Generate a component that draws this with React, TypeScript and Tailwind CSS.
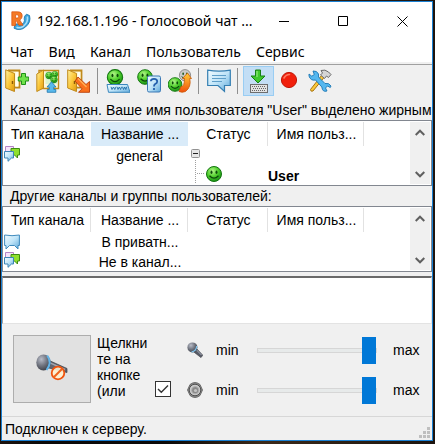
import type { ReactNode } from 'react';

const uiFont = "font-['Liberation_Sans',Arial,sans-serif]";
const captionFont = "font-['Noto_Sans','Open_Sans',sans-serif]";

function Defs() {
  return (
    <svg width="0" height="0" className="absolute" aria-hidden="true">
      <defs>
        <radialGradient id="green" cx="0.4" cy="0.3" r="0.75">
          <stop offset="0" stopColor="#b4f58a" />
          <stop offset="0.5" stopColor="#4fcf2c" />
          <stop offset="1" stopColor="#128a12" />
        </radialGradient>
        <linearGradient id="gold" x1="0" y1="0" x2="1" y2="1">
          <stop offset="0" stopColor="#fff0a0" />
          <stop offset="0.5" stopColor="#fcc93c" />
          <stop offset="1" stopColor="#e09a10" />
        </linearGradient>
        <linearGradient id="sky" x1="0" y1="0" x2="1" y2="1">
          <stop offset="0" stopColor="#f2fbff" />
          <stop offset="0.5" stopColor="#bfe4f8" />
          <stop offset="1" stopColor="#5fa9da" />
        </linearGradient>
        <linearGradient id="fire" x1="0" y1="0" x2="0" y2="1">
          <stop offset="0" stopColor="#ffcf3a" />
          <stop offset="1" stopColor="#f0500c" />
        </linearGradient>
        <radialGradient id="steel" cx="0.35" cy="0.3" r="0.8">
          <stop offset="0" stopColor="#b8bcc8" />
          <stop offset="0.5" stopColor="#70747f" />
          <stop offset="1" stopColor="#34363e" />
        </radialGradient>
      </defs>
    </svg>
  );
}

function Svg({ size = 24, children }: { size?: number; children: ReactNode }) {
  return (
    <svg width={size} height={size} viewBox={`0 0 ${size} ${size}`} className="block shrink-0" aria-hidden="true">
      {children}
    </svg>
  );
}

function Smiley({ cx, cy, r, fill = 'url(#green)', edge = '#12740f' }: { cx: number; cy: number; r: number; fill?: string; edge?: string }) {
  return (
    <g transform={`translate(${cx} ${cy}) scale(${r / 8})`}>
      <circle r="7.5" fill={fill} stroke={edge} />
      <ellipse cx="-2.5" cy="-1.8" rx="1" ry="1.7" fill="#0d4a0b" />
      <ellipse cx="2.5" cy="-1.8" rx="1" ry="1.7" fill="#0d4a0b" />
      <path d="M-4.5 1.8Q0 6.6 4.5 1.8" fill="none" stroke="#0d4a0b" strokeWidth="1.3" />
    </g>
  );
}

function Door() {
  return (
    <g>
      <path d="M3 1.5H14.5V18.5H9" fill="#fff3c0" stroke="#c08a1c" strokeWidth="1.8" />
      <path d="M10.5 3H13.3V17.5H10.5Z" fill="#fffdf0" />
      <path d="M.7 .8L9.5 4.5V22.5L.7 19Z" fill="url(#gold)" stroke="#c08a1c" />
      <path d="M7.5 12V15" stroke="#8a5a08" strokeWidth="1.4" />
    </g>
  );
}

const JoinIcon = () => (
  <Svg>
    <Door />
    <path d="M16.5 4.5H20.5V8H23.7V12H20.5V15.5H16.5V12H13.3V8H16.5Z" fill="#6fe24a" stroke="#1f8f18" />
  </Svg>
);

const RoomIcon = () => (
  <Svg>
    <path d="M3 1.5H22.5V19.5H3Z" fill="#fff7d8" stroke="#c08a1c" strokeWidth="1.4" />
    <path d="M9.5 3H21.5V15H9.5Z" fill="#d9f3cf" />
    <Smiley cx={13} cy={6.5} r={3.6} />
    <Smiley cx={18.8} cy={5.2} r={3.2} />
    <Smiley cx={18} cy={10.5} r={3.6} />
    <path d="M.8 5L7.5 1V19L.8 22.5Z" fill="url(#gold)" stroke="#c08a1c" />
    <path d="M15.5 12.8L20 18H17.8V20.5H19.8V23.3H11.2V20.5H13.2V18H11Z" fill="#59b9ec" stroke="#1c76ae" strokeWidth=".8" />
  </Svg>
);

const LeaveIcon = () => (
  <Svg>
    <Door />
    <path d="M11 8L19 15.5L22.5 12.5V23.3H11.5L15 19.8L8 12Z" fill="#f9701c" stroke="#b93e08" strokeWidth=".9" />
    <path d="M11 9.5L19.5 18" stroke="#ffae55" strokeWidth="1.4" />
  </Svg>
);

const WebUserIcon = () => (
  <Svg>
    <Smiley cx={9} cy={8.3} r={8.2} />
    <path d="M1 15.5H21.5L24 23.3H2.5Z" fill="url(#sky)" stroke="#3b87bd" />
    <path d="M5 17.8L6 20.5L7.5 18L8.8 20.5L10 17.8M11 17.8L12 20.5L13.3 18L14.6 20.5L15.6 17.8M16.5 17.8L17.5 20.5L18.7 18L19.8 20.5L20.8 17.8" fill="none" stroke="#1e6ca6" strokeWidth=".9" />
  </Svg>
);

const AskUserIcon = () => (
  <Svg>
    <Smiley cx={8} cy={8} r={7.8} />
    <rect x="10.5" y="7" width="13" height="16" rx="1.5" fill="url(#sky)" stroke="#3b78b5" />
    <path d="M13.8 12.2Q14 9.8 17 9.8Q20.2 9.8 20.2 12.4Q20.2 14 18.2 15Q17 15.8 17 17.4M17 19V21" fill="none" stroke="#2460ad" strokeWidth="1.8" />
  </Svg>
);

const SwapUserIcon = () => (
  <Svg>
    <Smiley cx={17} cy={6.2} r={6} fill="#cbcbcb" edge="#777777" />
    <Smiley cx={7} cy={15.5} r={7.3} />
    <path d="M19.5 4L23.5 9.5H21.8Q23.5 18 17.5 22.5Q14 24 11 22.5L13 17.5Q16.5 18 16.5 9.5H14.5Z" fill="url(#fire)" stroke="#c95a0a" strokeWidth=".8" />
  </Svg>
);

const MessageIcon = () => (
  <Svg>
    <path d="M.7 1.2Q12 3 23.3 1.2V16.5H17.5V22.5L11 16.5H.7Z" fill="url(#sky)" stroke="#357fb2" strokeWidth="1.2" />
    <path d="M5 6.5H19M5 9.5H19M5 12.5H15" stroke="#5f9fc9" />
  </Svg>
);

const HotkeyIcon = () => (
  <Svg>
    <path d="M9.5 1H14.5V7H19L12 14L5 7H9.5Z" fill="#3dc82c" stroke="#168015" />
    <path d="M11 2V8" stroke="#a2f38a" />
    <rect x="4.5" y="15.5" width="17" height="8" fill="#e2e2e2" stroke="#6e6e6e" />
    <path d="M6 17.5H20M7 19.5H20M6 21.5H20" stroke="#666666" strokeWidth="1.2" strokeDasharray="1 1" />
  </Svg>
);

const RecordIcon = () => (
  <Svg>
    <circle cx="12" cy="11" r="7.6" fill="#f1200c" stroke="#c01808" />
    <path d="M7 9Q9 5.5 12.5 5.5" fill="none" stroke="#ff7c62" strokeWidth="1.6" strokeLinecap="round" />
  </Svg>
);

const ToolsIcon = () => (
  <Svg>
    <path d="M16 8.5L5 22Q2.5 23 2.5 20.5L13.5 6.5Z" fill="#fbc93a" stroke="#a87410" />
    <path d="M13 1.5Q17 0 20.5 3L23 5.5L20.5 8.5L18.5 7L16.5 9.5L12.5 6L14.5 4Z" fill="#d5d5d5" stroke="#6b6b6b" />
    <path d="M1 5L3.8 7.2L6.3 5.5L5 2Q9 1.5 10.5 5V8L17 14.5Q21 13.5 23 17L22.3 18.5L19.5 17L17.5 19L19 22Q14.5 23.5 13.8 18L7.5 11Q2.5 12 1 7Z" fill="#55b7ef" stroke="#1b76b3" strokeWidth=".9" />
  </Svg>
);

const LogoIcon = () => (
  <Svg size={20}>
    <path d="M15.5 3.2L18.5 4.5Q20.5 11 14.5 16Q9 20.5 3 17.2L4.2 13.2Q7 12.2 9 14.2Q14.5 12 13.2 7.6Q13 5 15.5 3.2Z" fill="#3ba5df" stroke="#1671a8" strokeWidth=".8" />
    <path d="M16.3 5.5Q17.6 11 12.3 15.3Q9 17.6 5.5 16.2" fill="none" stroke="#a8e0fa" strokeWidth="1.6" />
    <path d="M.8 .8H6.6Q11.2 .8 11.2 5Q11.2 7.8 8.8 9L12 14.2H7.8L5.4 9.8H4.6V14.6H.8ZM4.6 3.8V7H6.2Q7.6 7 7.6 5.4Q7.6 3.8 6.2 3.8Z" fill="#f47a26" stroke="#d9500c" strokeWidth=".7" fillRule="evenodd" />
  </Svg>
);

const ChannelIcon = () => (
  <Svg size={16}>
    <path d="M1.5 .5H9.5V6.5H4L1.5 8Z" fill="#f5e3fa" stroke="#b483c6" />
    <path d="M7 2.5H15.5V9H13.5V12L10.5 9H7Z" fill="#8fe02e" stroke="#3f8c12" />
    <path d="M.5 5.5H9.5V12H7.5L4 15.3V12H.5Z" fill="url(#sky)" stroke="#3c84b6" />
  </Svg>
);

const PrivateIcon = () => (
  <Svg size={16}>
    <path d="M.6 1Q8 2.4 15.4 1V11.5H14V15L10.5 11.5H5.5L2 15V11.5H.6Z" fill="url(#sky)" stroke="#3f8abd" />
  </Svg>
);

const MicIcon = () => (
  <Svg size={16}>
    <path d="M8.5 5.5L15.8 13.2L14 15.6L5.8 9.2Z" fill="#585c68" stroke="#34363e" strokeWidth=".6" />
    <path d="M9.5 8L14.5 13" stroke="#a9adba" />
    <circle cx="5.4" cy="5.4" r="5" fill="url(#steel)" />
    <path d="M4.6 10Q9.4 9 9.8 4" fill="none" stroke="#7fc0ea" strokeWidth="1.3" />
  </Svg>
);

const MutedMicIcon = () => (
  <Svg size={32}>
    <path d="M12 7L31 15.5V19.5L11 14.5Z" fill="#62656f" stroke="#3b3d44" strokeWidth=".7" />
    <path d="M14 9.8L29 16.5" stroke="#a3a6b0" strokeWidth="1.4" />
    <ellipse cx="7.5" cy="9.5" rx="7.2" ry="8" fill="url(#steel)" />
    <path d="M11.2 2.5Q16.5 9.5 10.5 17" fill="none" stroke="#62b4e8" strokeWidth="2" />
    <circle cx="22" cy="20" r="6.3" fill="#fff2d2" fillOpacity=".9" stroke="#f0530c" strokeWidth="1.8" />
    <path d="M17.5 24.5L26.5 15.5" stroke="#f0631c" strokeWidth="2" />
  </Svg>
);

const SpeakerIcon = () => (
  <Svg size={16}>
    <path d="M3 2.5Q8 -1.5 13 2.5L15.5 8L13 13.5Q8 17.5 3 13.5L.5 8Z" fill="#8b8b8b" stroke="#5b5b5b" strokeWidth=".8" />
    <circle cx="8" cy="8" r="5.8" fill="#c9c9c9" stroke="#505050" />
    <circle cx="8.2" cy="8.2" r="3.6" fill="#8a8a8a" stroke="#b5b5b5" strokeWidth=".8" />
    <circle cx="8.5" cy="8.5" r="1.6" fill="#c4c4c4" />
  </Svg>
);

function ToolButton({ label, active, children }: { label: string; active?: boolean; children: ReactNode }) {
  return (
    <button
      type="button"
      aria-label={label}
      aria-pressed={active}
      className={`flex h-[30px] w-[31px] shrink-0 items-center border pl-0.5 ${active ? 'border-[#99cdf3] bg-[#c3def5]' : 'border-transparent'}`}
    >
      {children}
    </button>
  );
}

const Separator = () => <span className="h-[26px] w-2 shrink-0 pl-0.5"><span className="block h-full w-px bg-[#8f8f8f]" /></span>;

const headers = ['Тип канала', 'Название ...', 'Статус', 'Имя польз...'];

function ChannelList({ label, sorted, children }: { label: string; sorted?: boolean; children: ReactNode }) {
  return (
    <div className="flex h-[66px] shrink-0 overflow-hidden border border-[#828790] bg-white pt-px">
      <div className="min-w-0 flex-1 overflow-hidden">
        <table aria-label={label} className="w-full table-fixed border-collapse">
          <colgroup>
            <col className="w-[88px]" />
            <col className="w-[97px]" />
            <col className="w-[80px]" />
            <col className="w-[96px]" />
            <col />
          </colgroup>
          <thead>
            <tr className="h-6">
              {headers.map((h, i) => (
                <th
                  key={h}
                  scope="col"
                  className={`p-0 pl-px font-normal ${sorted && i === 1 ? 'bg-[#d9ebf9]' : ''} ${sorted && i < 2 ? '' : 'shadow-[inset_-1px_0_0_#e2e2e2]'}`}
                >
                  {h}
                </th>
              ))}
              <td />
            </tr>
          </thead>
          <tbody>{children}</tbody>
        </table>
      </div>
      <div className="mr-px mb-px flex w-5 shrink-0 flex-col justify-between bg-[#f0f0f0]">
        <button type="button" aria-label="Вверх" className="flex h-5 items-center justify-center">
          <svg width="10" height="7" viewBox="0 0 10 7"><path d="M.7 6L5 1.7L9.3 6" fill="none" stroke="#606060" strokeWidth="2" /></svg>
        </button>
        <button type="button" aria-label="Вниз" className="flex h-5 items-center justify-center">
          <svg width="10" height="7" viewBox="0 0 10 7"><path d="M.7 1L5 5.3L9.3 1" fill="none" stroke="#606060" strokeWidth="2" /></svg>
        </button>
      </div>
    </div>
  );
}

function VolumeRow({ id, label, icon }: { id: string; label: string; icon: ReactNode }) {
  return (
    <div className="flex h-10 items-center">
      {icon}
      <label htmlFor={id} className="ml-3 w-[42px] pl-px">min</label>
      <input
        id={id}
        type="range"
        aria-label={label}
        defaultValue={100}
        className="h-[27px] min-w-0 flex-1 appearance-none bg-transparent [&::-webkit-slider-runnable-track]:h-[5px] [&::-webkit-slider-runnable-track]:border [&::-webkit-slider-runnable-track]:border-[#d6d6d6] [&::-webkit-slider-runnable-track]:bg-[#e7eaea] [&::-webkit-slider-thumb]:mt-[-12px] [&::-webkit-slider-thumb]:h-[27px] [&::-webkit-slider-thumb]:w-[14px] [&::-webkit-slider-thumb]:appearance-none [&::-webkit-slider-thumb]:bg-[#0078d7]"
      />
      <span className="ml-4 w-[27px]">max</span>
    </div>
  );
}

export default function App() {
  return (
    <div className={`flex min-h-screen flex-col bg-[linear-gradient(90deg,#1c130d_0,#0b0908_10%,#0b0908_38%,#3c2a1a_60%,#1c140e_100%)] pt-px pr-0.5 pb-[3px] pl-px text-[14px] leading-4 text-black ${uiFont}`}>
      <Defs />
      <div className="flex flex-1 flex-col border border-[#1a80d2] bg-[#f0f0f0]">
        <header className={`bg-white ${captionFont}`}>
          <div className="flex h-[38px] items-center pl-[9px]">
            <LogoIcon />
            <h1 className="ml-1.5 min-w-0 flex-1 truncate text-[14px] leading-5">192.168.1.196 - Голосовой чат ...</h1>
            <div className="flex shrink-0">
              <button type="button" aria-label="Свернуть" className="flex h-8 w-[59px] items-center justify-center">
                <svg width="11" height="11" viewBox="0 0 11 11"><path d="M0 5.5H10" stroke="#000" /></svg>
              </button>
              <button type="button" aria-label="Развернуть" className="flex h-8 w-[59px] items-center justify-center">
                <svg width="11" height="11" viewBox="0 0 11 11"><path d="M.5 .5H9.5V9.5H.5Z" fill="none" stroke="#000" /></svg>
              </button>
              <button type="button" aria-label="Закрыть" className="flex h-8 w-[59px] items-center justify-center">
                <svg width="11" height="11" viewBox="0 0 11 11"><path d="M.5 .5L10.5 10.5M10.5 .5L.5 10.5" stroke="#000" /></svg>
              </button>
            </div>
          </div>
          <nav className="flex h-[22px] items-center gap-[15px] pt-px pl-2 text-[14px] leading-5">
            {['Чат', 'Вид', 'Канал', 'Пользователь', 'Сервис'].map((m) => (
              <button key={m} type="button">{m}</button>
            ))}
          </nav>
        </header>

        <div className="mt-0.5 flex items-center border-t border-[#a0a0a0] pt-px">
          <ToolButton label="Подключиться"><JoinIcon /></ToolButton>
          <ToolButton label="Комната"><RoomIcon /></ToolButton>
          <ToolButton label="Покинуть канал"><LeaveIcon /></ToolButton>
          <Separator />
          <ToolButton label="Сайт пользователя"><WebUserIcon /></ToolButton>
          <ToolButton label="Сведения о пользователе"><AskUserIcon /></ToolButton>
          <ToolButton label="Переместить пользователя"><SwapUserIcon /></ToolButton>
          <Separator />
          <ToolButton label="Сообщение"><MessageIcon /></ToolButton>
          <Separator />
          <ToolButton label="Говорить по клавише" active><HotkeyIcon /></ToolButton>
          <ToolButton label="Запись"><RecordIcon /></ToolButton>
          <ToolButton label="Настройки"><ToolsIcon /></ToolButton>
        </div>

        <p className="h-6 overflow-hidden pt-1.5 pl-2 whitespace-nowrap">
          Канал создан. Ваше имя пользователя "User" выделено жирным шрифтом
        </p>

        <ChannelList label="Каналы" sorted>
          <tr className="h-5">
            <td className="p-0 pl-px align-top"><ChannelIcon /></td>
            <td className="p-0 text-center">general</td>
            <td className="p-0 pl-[3px]">
              <svg width="9" height="20" viewBox="0 0 9 20" className="block">
                <path d="M4.5 14V20" stroke="#a0a0a0" strokeDasharray="1 1" />
                <rect x=".5" y="3.5" width="8" height="8" rx="1" fill="#e6e6e6" stroke="#929292" />
                <path d="M2 7.5H7" stroke="#222" />
              </svg>
            </td>
            <td colSpan={2} />
          </tr>
          <tr className="h-5">
            <td colSpan={2} />
            <td className="p-0 pl-[3px]">
              <svg width="32" height="20" viewBox="0 0 32 20" className="block">
                <path d="M4.5 0V18M6 7.5H14" stroke="#a0a0a0" strokeDasharray="1 1" />
                <Smiley cx={23} cy={8} r={8} />
              </svg>
            </td>
            <td colSpan={2} className="p-0 font-bold">User</td>
          </tr>
        </ChannelList>

        <h2 className="h-5 pt-0.5 pl-2">Другие каналы и группы пользователей:</h2>

        <ChannelList label="Другие каналы и группы пользователей">
          <tr className="h-5">
            <td className="p-0 pl-px"><PrivateIcon /></td>
            <td className="p-0 pl-px text-center">В приватн...</td>
            <td colSpan={3} />
          </tr>
          <tr className="h-5">
            <td className="p-0 pl-px align-top"><ChannelIcon /></td>
            <td className="p-0 pl-px text-center">Не в канал...</td>
            <td colSpan={3} />
          </tr>
        </ChannelList>

        <textarea
          aria-label="Сообщения"
          readOnly
          className="mt-1 min-h-[48px] w-full flex-1 resize-none border-t-2 border-r border-b border-l border-t-[#696969] border-r-[#e3e3e3] border-b-[#e3e3e3] border-l-[#a0a0a0] bg-white"
        />

        <div className="flex h-[92px] shrink-0 items-start pt-[6px] pl-[11px]">
          <button type="button" aria-label="Микрофон" className="mt-[5px] flex h-[68px] w-[78px] shrink-0 items-center justify-center border border-[#adadad] bg-[#e1e1e1]">
            <MutedMicIcon />
          </button>
          <label htmlFor="voice" className="mt-[5px] ml-1.5 h-16 w-14 shrink-0 overflow-hidden break-words">Щелкните на кнопке (или</label>
          <span className="mt-[51px] ml-0.5 grid h-4 w-4 shrink-0">
            <input
              id="voice"
              type="checkbox"
              defaultChecked
              className="peer col-start-1 row-start-1 h-4 w-4 appearance-none border border-[#333333] bg-white"
            />
            <svg width="16" height="16" viewBox="0 0 16 16" aria-hidden="true" className="pointer-events-none invisible col-start-1 row-start-1 block peer-checked:visible">
              <path d="M3 8L6.3 11.3L13 4.6" fill="none" stroke="#333" strokeWidth="1.4" />
            </svg>
          </span>
          <div className="ml-4 min-w-0 flex-1 pr-3">
            <VolumeRow id="mic" label="Громкость микрофона" icon={<MicIcon />} />
            <VolumeRow id="speaker" label="Громкость динамика" icon={<SpeakerIcon />} />
          </div>
        </div>

        <footer className="flex h-6 shrink-0 items-center justify-between border-t border-[#d7d7d7] pr-0.5 pl-[3px]">
          <span>Подключен к серверу.</span>
          <svg width="11" height="11" viewBox="0 0 11 11" className="mb-0.5 self-end" aria-hidden="true">
            <path d="M8 0H11V3H8ZM4 4H7V7H4ZM8 4H11V7H8ZM0 8H3V11H0ZM4 8H7V11H4ZM8 8H11V11H8Z" fill="#bfbfbf" />
          </svg>
        </footer>
      </div>
    </div>
  );
}
